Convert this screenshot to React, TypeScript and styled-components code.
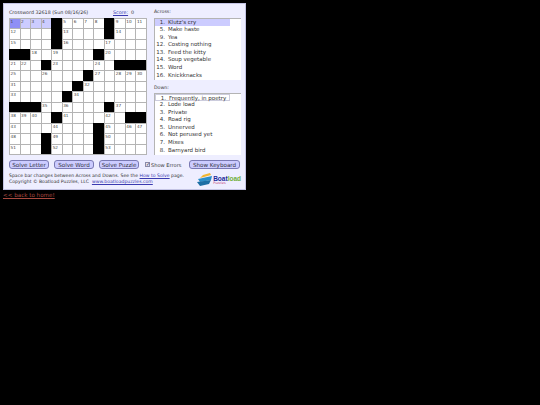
import React from 'react';
import styled, { createGlobalStyle } from 'styled-components';

const GlobalStyle = createGlobalStyle`
    html, body {
        margin: 0;
        background: #000;
    }
    body {
        padding: 3px;
        font-family: "DejaVu Sans", Verdana, sans-serif;
    }
`;

// 13x13, "#" is a black square, a number is the clue number in that square
const rows = [
    '1 2 3 4 # 5 6 7 8 # 9 10 11',
    '12 . . . # 13 . . . # 14 . .',
    '15 . . . # 16 . . . 17 . . .',
    '# # 18 . 19 . . . # 20 . . .',
    '21 22 . # 23 . . . 24 . # # #',
    '25 . . 26 . . . # 27 . 28 29 30',
    '31 . . . . . # 32 . . . . .',
    '33 . . . . # 34 . . . . . .',
    '# # # 35 . 36 . . . # 37 . .',
    '38 39 40 . # 41 . . . 42 . # #',
    '43 . . . 44 . . . # 45 . 46 47',
    '48 . . # 49 . . . # 50 . . .',
    '51 . . # 52 . . . # 53 . . .',
].map((r) => r.split(' '));

const across = [
    [1, "Klutz's cry"],
    [5, 'Make haste'],
    [9, 'Yea'],
    [12, 'Costing nothing'],
    [13, 'Feed the kitty'],
    [14, 'Soup vegetable'],
    [15, 'Word'],
    [16, 'Knickknacks'],
];

const down = [
    [1, 'Frequently, in poetry'],
    [2, 'Lode load'],
    [3, 'Private'],
    [4, 'Road rig'],
    [5, 'Unnerved'],
    [6, 'Not perused yet'],
    [7, 'Mixes'],
    [8, 'Barnyard bird'],
];

const cellTone = (r: number, c: number, v: string) => {
    if (v === '#') return 'black';
    if (r === 0 && c === 0) return 'current';
    if (r === 0 && c < 4) return 'word';
    return 'plain';
};

const ClueList = ({ items, mode }: { items: (string | number)[][]; mode: 'solid' | 'outline' }) => (
    <ClueBox>
        {items.map(([n, text], i) => (
            <ClueRow key={n} $mode={i === 0 ? mode : undefined}>
                <ClueNum>{n}.</ClueNum>
                <span>{text}</span>
            </ClueRow>
        ))}
    </ClueBox>
);

const Logo = () => (
    <LogoWrap>
        <svg width="15" height="13" viewBox="0 0 15 13">
            <path d="M3 5 L6 2 L13 0 L14 2 L7 4 Z" fill="#f2b632" />
            <path d="M1 6 L15 3 L14 7 L3 9 Z" fill="#2a8fc9" />
            <path d="M0 9 L14 7 L12 11 L3 13 Z" fill="#1c6ea4" />
        </svg>
        <LogoText>
            <LogoWord><b>Boat</b><i>load</i></LogoWord>
            <LogoSub>Puzzles</LogoSub>
        </LogoText>
    </LogoWrap>
);

export default function App() {
    return (
        <>
            <GlobalStyle />
            <Panel>
                <Top>
                    <PuzzleSide>
                        <TitleRow>
                            <span>Crossword 32618 (Sun 08/16/26)</span>
                            <Score><a href="#score">Score:</a>&nbsp; 0</Score>
                        </TitleRow>
                        <Grid>
                            {rows.map((row, r) =>
                                row.map((v, c) => (
                                    <Cell key={`${r}-${c}`} $tone={cellTone(r, c, v)}>
                                        {v !== '#' && v !== '.' ? v : ''}
                                    </Cell>
                                )),
                            )}
                        </Grid>
                    </PuzzleSide>
                    <ClueSide>
                        <ClueHead>Across:</ClueHead>
                        <ClueList items={across} mode="solid" />
                        <DownHead>Down:</DownHead>
                        <ClueList items={down} mode="outline" />
                    </ClueSide>
                </Top>
                <Buttons>
                    <Btn>Solve Letter</Btn>
                    <Btn>Solve Word</Btn>
                    <Btn>Solve Puzzle</Btn>
                    <Check>
                        <input type="checkbox" defaultChecked />
                        Show Errors
                    </Check>
                    <WideBtn>Show Keyboard</WideBtn>
                </Buttons>
                <Footer>
                    <FootText>
                        Space bar changes between Across and Downs. See the <a href="#how">How to Solve</a> page.
                        <br />
                        Copyright © Boatload Puzzles, LLC &nbsp;<a href="#site">www.boatloadpuzzles.com</a>
                    </FootText>
                    <Logo />
                </Footer>
            </Panel>
            <Back href="#home">&lt;&lt; back to home!</Back>
        </>
    );
}

const Panel = styled.div`
    width: 243px;
    height: 186.5px;
    box-sizing: border-box;
    padding: 3px 4px 0 5px;
    background: #eeeeff;
    border: 1px solid #c4c4e4;
    color: #333;
    font-size: 4.8px;
    display: flex;
    flex-direction: column;
    a {
        color: #3a3ab0;
    }
`;

const Top = styled.div`
    display: flex;
    justify-content: space-between;
`;

const PuzzleSide = styled.div`
    width: 138px;
`;

const TitleRow = styled.div`
    display: flex;
    height: 10.5px;
    align-items: center;
    white-space: nowrap;
    span:first-child {
        width: 104px;
    }
`;

const Score = styled.div`
    white-space: nowrap;
`;

const Grid = styled.div`
    display: grid;
    grid-template-columns: repeat(13, 10.54px);
    grid-auto-rows: 10.5px;
    background: #fff;
    border-right: 1px solid #b4b4b4;
    border-bottom: 1px solid #b4b4b4;
    width: 138px;
    box-sizing: border-box;
`;

const Cell = styled.div<{ $tone: string }>`
    box-sizing: border-box;
    border-left: 1px solid ${(p) => (p.$tone === 'black' ? '#000' : '#b4b4b4')};
    border-top: 1px solid ${(p) => (p.$tone === 'black' ? '#000' : '#b4b4b4')};
    font-size: 4.2px;
    line-height: 5px;
    padding-left: 0.5px;
    color: #444;
    overflow: hidden;
    background: ${(p) =>
        p.$tone === 'black' ? '#000' : p.$tone === 'current' ? '#8f8ff5' : p.$tone === 'word' ? '#ccccff' : '#fff'};
`;

const ClueSide = styled.div`
    width: 87px;
    display: flex;
    flex-direction: column;
`;

const ClueHead = styled.div`
    height: 10.5px;
    line-height: 10.5px;
    font-size: 4.7px;
`;

const DownHead = styled(ClueHead)`
    height: 12.5px;
    line-height: 15px;
`;

const ClueBox = styled.div`
    height: 62.5px;
    overflow: hidden;
    background: #fff;
    border-top: 1px solid #b4b4b4;
    border-left: 1px solid #b4b4b4;
    box-sizing: border-box;
`;

const ClueRow = styled.div<{ $mode?: 'solid' | 'outline' }>`
    display: flex;
    width: 75px;
    height: 7.6px;
    line-height: 7.6px;
    font-size: 5.5px;
    white-space: nowrap;
    box-sizing: border-box;
    background: ${(p) => (p.$mode === 'solid' ? '#ccccff' : 'transparent')};
    border: ${(p) => (p.$mode === 'outline' ? '0.5px solid #ccd' : '0')};
`;

const ClueNum = styled.span`
    width: 10px;
    margin-right: 3px;
    text-align: right;
`;

const Buttons = styled.div`
    display: flex;
    align-items: center;
    margin-top: 5px;
    height: 9px;
`;

const Btn = styled.button`
    width: 40px;
    height: 9px;
    margin-right: 5px;
    padding: 0;
    font: 5.6px "DejaVu Sans", Verdana, sans-serif;
    color: #334;
    background: #ccccff;
    border: 1px solid #7a7ab4;
    border-radius: 3px;
    white-space: nowrap;
`;

const WideBtn = styled(Btn)`
    width: 51px;
    margin: 0;
`;

const Check = styled.label`
    display: flex;
    align-items: center;
    width: 45px;
    padding-left: 1px;
    box-sizing: border-box;
    font-size: 5.1px;
    white-space: nowrap;
    input {
        appearance: none;
        position: relative;
        width: 5px;
        height: 5px;
        margin: 0 1px 0 0;
        box-sizing: border-box;
        border: 1px solid #8a8aa8;
        background: #e4e4f4;
    }
    input:checked::after {
        content: '✓';
        position: absolute;
        left: -0.5px;
        top: -1px;
        font-size: 4.5px;
        line-height: 5px;
        color: #334;
    }
`;

const Footer = styled.div`
    display: flex;
    justify-content: space-between;
    align-items: flex-start;
    margin-top: 3.5px;
`;

const FootText = styled.div`
    font-size: 4.6px;
    line-height: 6.8px;
    white-space: nowrap;
`;

const LogoWrap = styled.div`
    display: flex;
    align-items: flex-end;
    flex-shrink: 0;
    gap: 1px;
`;

const LogoText = styled.div`
    display: flex;
    flex-direction: column;
`;

const LogoWord = styled.div`
    font-family: "Liberation Sans", Arial, sans-serif;
    font-size: 6.5px;
    line-height: 6px;
    font-weight: 700;
    b {
        color: #1a2a9a;
    }
    i {
        font-style: normal;
        color: #6fae3a;
    }
`;

const LogoSub = styled.div`
    font-size: 3.4px;
    line-height: 3.5px;
    color: #c0457a;
`;

const Back = styled.a`
    display: block;
    width: fit-content;
    margin-top: 2px;
    font-size: 5.6px;
    line-height: 7px;
    color: #a84a40;
`;
